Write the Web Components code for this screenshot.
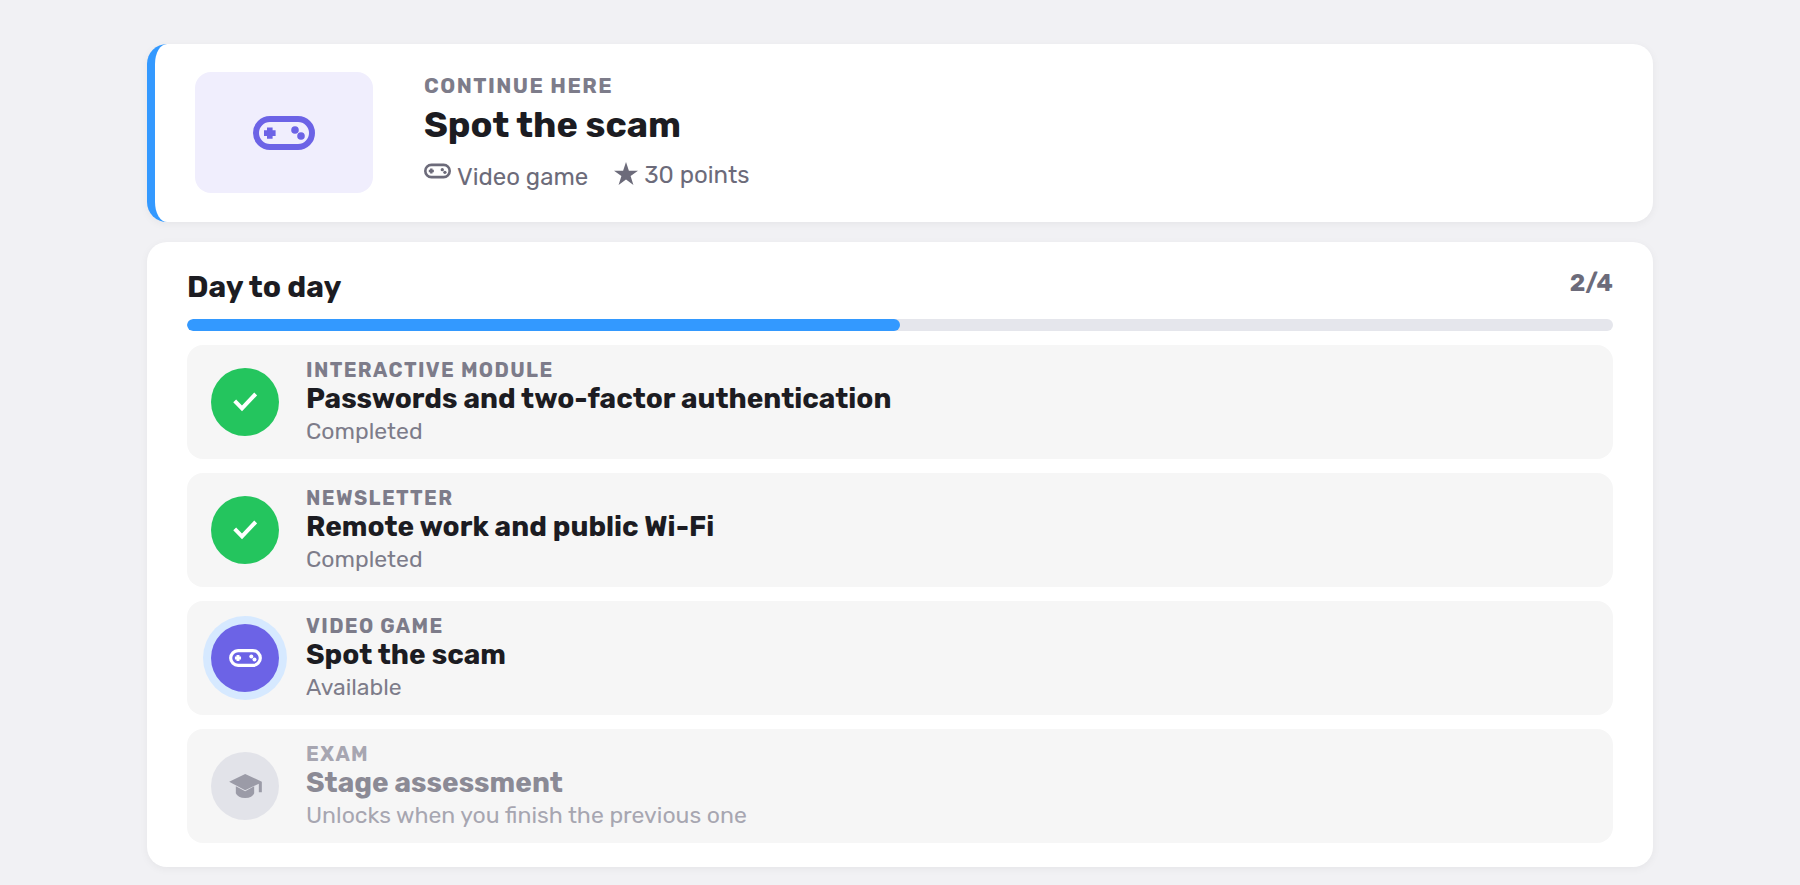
<!DOCTYPE html>
<html lang="en">
<head>
<meta charset="UTF-8">
<meta name="viewport" content="width=device-width, initial-scale=1">
<title>Day to day</title>
<style>
  :root {
    --bg: #f1f1f4;
    --card: #ffffff;
    --row: #f6f6f6;
    --ink: #1c1c22;
    --ink-soft: #6c6b7a;
    --ink-muted: #7d7c8a;
    --blue: #3399ff;
    --purple: #6c63e6;
    --green: #24c55e;
    --track: #e5e6ec;
  }

  body {
    margin: 0;
    padding: 44px 147px 18px;
    background: var(--bg);
    color: var(--ink);
    font-family: Rubik, Inter, "Liberation Sans", sans-serif;
  }

  main {
    display: flex;
    flex-direction: column;
    gap: 20px;
  }

  @media (max-width: 900px) {
    body {
      padding: 24px 16px;
    }
  }
</style>
</head>
<body>
<main>
  <continue-card>
    <span slot="eyebrow">Continue here</span>
    <span slot="title">Spot the scam</span>
    <span slot="kind">Video game</span>
    <span slot="points">30 points</span>
  </continue-card>

  <stage-card done="2" total="4">
    <span slot="title">Day to day</span>
    <stage-item state="done" icon="check">
      <span slot="kind">Interactive module</span>
      <span slot="title">Passwords and two-factor authentication</span>
      <span slot="status">Completed</span>
    </stage-item>
    <stage-item state="done" icon="check">
      <span slot="kind">Newsletter</span>
      <span slot="title">Remote work and public Wi-Fi</span>
      <span slot="status">Completed</span>
    </stage-item>
    <stage-item state="available" icon="gamepad">
      <span slot="kind">Video game</span>
      <span slot="title">Spot the scam</span>
      <span slot="status">Available</span>
    </stage-item>
    <stage-item state="locked" icon="cap">
      <span slot="kind">Exam</span>
      <span slot="title">Stage assessment</span>
      <span slot="status">Unlocks when you finish the previous one</span>
    </stage-item>
  </stage-card>
</main>

<script>
const ICONS = {
  gamepad: {
    viewBox: '0 0 62 34',
    body: `
      <rect x="3" y="3" width="56" height="28" rx="14" fill="none" stroke="currentColor" stroke-width="6"/>
      <path d="M14 11.5h5.6v2.8h3v5.6h-3v2.8H14v-2.8h-3v-5.6h3z"/>
      <circle cx="42" cy="14" r="3.8"/>
      <circle cx="48" cy="20" r="3.8"/>
    `
  },
  check: {
    viewBox: '0 0 24 20',
    body: '<path d="M1.7 8.9 9 16.4 22.7 2" fill="none" stroke="currentColor" stroke-width="4"/>'
  },
  cap: {
    viewBox: '0 0 98 72',
    body: `
      <path d="M0 23 48 0 98 23V55H89V29L48 49z"/>
      <path d="M20 37 48 52 75 37V58Q70 72 48 72 26 72 20 58z"/>
    `
  },
  star: {
    viewBox: '0 0 24 24',
    body: '<path d="M12 0 14.9 8.7H24L16.6 14.1 19.4 23 12 17.6 4.6 23 7.4 14.1 0 8.7H9.1z"/>'
  }
};

// Icon that fills the box given by its host
class AppIcon extends HTMLElement {
  constructor() {
    super();
    this.attachShadow({ mode: 'open' });
  }

  connectedCallback() {
    const icon = ICONS[this.getAttribute('name')];
    this.shadowRoot.innerHTML = `
      <style>
        :host {
          display: block;
          flex: none;
        }

        svg {
          display: block;
          width: 100%;
          height: 100%;
        }
      </style>
      <svg viewBox="${icon.viewBox}" fill="currentColor" aria-hidden="true">${icon.body}</svg>
    `;
  }
}

// Card with the next activity
class ContinueCard extends HTMLElement {
  constructor() {
    super();
    this.attachShadow({ mode: 'open' });
  }

  connectedCallback() {
    this.shadowRoot.innerHTML = `
      <style>
        :host {
          display: flex;
          align-items: center;
          gap: 51px;
          padding: 28px 40px 29px;
          background: var(--card);
          border-left: 8px solid var(--blue);
          border-radius: 20px;
          box-shadow: 0 2px 8px rgba(0, 0, 0, 0.05);
        }

        .thumb {
          display: flex;
          align-items: center;
          justify-content: center;
          flex: none;
          width: 178px;
          height: 121px;
          border-radius: 16px;
          background: #f0eefd;
          color: var(--purple);
        }

        .thumb app-icon {
          width: 62px;
          height: 34px;
        }

        .eyebrow {
          margin: 0 0 4px;
          font-size: 21px;
          font-weight: 700;
          line-height: 26px;
          letter-spacing: 0.07em;
          text-transform: uppercase;
          color: var(--ink-muted);
        }

        h1 {
          margin: 0 0 15px;
          font-size: 36px;
          font-weight: 700;
          line-height: 44px;
        }

        .meta {
          display: flex;
          align-items: flex-start;
          gap: 26px;
          font-size: 24px;
          line-height: 30px;
          color: var(--ink-soft);
        }

        .meta div {
          display: flex;
          gap: 6px;
        }

        .kind app-icon {
          width: 27px;
          height: 18px;
        }

        .points {
          line-height: 26px;
        }

        .points app-icon {
          width: 24px;
          height: 24px;
        }
      </style>
      <div class="thumb"><app-icon name="gamepad"></app-icon></div>
      <div>
        <p class="eyebrow"><slot name="eyebrow"></slot></p>
        <h1><slot name="title"></slot></h1>
        <div class="meta">
          <div class="kind"><app-icon name="gamepad"></app-icon><slot name="kind"></slot></div>
          <div class="points"><app-icon name="star"></app-icon><slot name="points"></slot></div>
        </div>
      </div>
    `;
  }
}

// Stage card: heading, progress and its items
class StageCard extends HTMLElement {
  constructor() {
    super();
    this.attachShadow({ mode: 'open' });
  }

  connectedCallback() {
    const done = Number(this.getAttribute('done'));
    const total = Number(this.getAttribute('total'));
    this.shadowRoot.innerHTML = `
      <style>
        :host {
          display: flex;
          flex-direction: column;
          gap: 14px;
          padding: 27px 40px 24px;
          background: var(--card);
          border-radius: 20px;
          box-shadow: 0 2px 8px rgba(0, 0, 0, 0.05);
        }

        header {
          display: flex;
          align-items: flex-start;
          justify-content: space-between;
        }

        h2 {
          margin: 0;
          font-size: 30px;
          font-weight: 700;
          line-height: 36px;
        }

        .count {
          font-size: 24px;
          font-weight: 700;
          line-height: 28px;
          color: var(--ink-soft);
        }

        .track {
          height: 12px;
          border-radius: 6px;
          background: var(--track);
          overflow: hidden;
        }

        .fill {
          width: ${done / total * 100}%;
          height: 100%;
          border-radius: 6px;
          background: var(--blue);
        }

        .items {
          display: flex;
          flex-direction: column;
          gap: 14px;
        }
      </style>
      <header>
        <h2><slot name="title"></slot></h2>
        <span class="count">${done}/${total}</span>
      </header>
      <div class="track" role="progressbar" aria-valuemin="0" aria-valuemax="${total}" aria-valuenow="${done}">
        <div class="fill"></div>
      </div>
      <div class="items" role="list"><slot></slot></div>
    `;
  }
}

// One activity of a stage: done, available or locked
class StageItem extends HTMLElement {
  constructor() {
    super();
    this.attachShadow({ mode: 'open' });
  }

  connectedCallback() {
    this.setAttribute('role', 'listitem');
    const icon = this.getAttribute('icon');
    this.shadowRoot.innerHTML = `
      <style>
        :host {
          display: flex;
          align-items: center;
          gap: 27px;
          padding: 13px 24px;
          border-radius: 16px;
          background: var(--row);
        }

        .badge {
          display: flex;
          align-items: center;
          justify-content: center;
          flex: none;
          width: 68px;
          height: 68px;
          border-radius: 50%;
          background: var(--green);
          color: #ffffff;
        }

        .check {
          width: 24px;
          height: 20px;
        }

        .gamepad {
          width: 33px;
          height: 18px;
        }

        .cap {
          width: 33px;
          height: 24px;
        }

        p,
        h3 {
          margin: 0;
        }

        .kind {
          font-size: 20px;
          font-weight: 700;
          line-height: 24px;
          letter-spacing: 0.07em;
          text-transform: uppercase;
          color: var(--ink-muted);
        }

        h3 {
          font-size: 28px;
          font-weight: 700;
          line-height: 34px;
        }

        .status {
          font-size: 23px;
          line-height: 30px;
          color: var(--ink-muted);
        }

        :host([state="available"]) .badge {
          background: var(--purple);
          box-shadow: 0 0 0 8px #d6e9ff;
        }

        :host([state="locked"]) .badge {
          background: #e2e3e9;
          color: #9b9ba7;
        }

        :host([state="locked"]) .kind,
        :host([state="locked"]) .status {
          color: #a7a6b1;
        }

        :host([state="locked"]) h3 {
          color: #8b8a95;
        }
      </style>
      <div class="badge"><app-icon class="${icon}" name="${icon}"></app-icon></div>
      <div>
        <p class="kind"><slot name="kind"></slot></p>
        <h3><slot name="title"></slot></h3>
        <p class="status"><slot name="status"></slot></p>
      </div>
    `;
  }
}

customElements.define('app-icon', AppIcon);
customElements.define('continue-card', ContinueCard);
customElements.define('stage-card', StageCard);
customElements.define('stage-item', StageItem);
</script>
</body>
</html>
